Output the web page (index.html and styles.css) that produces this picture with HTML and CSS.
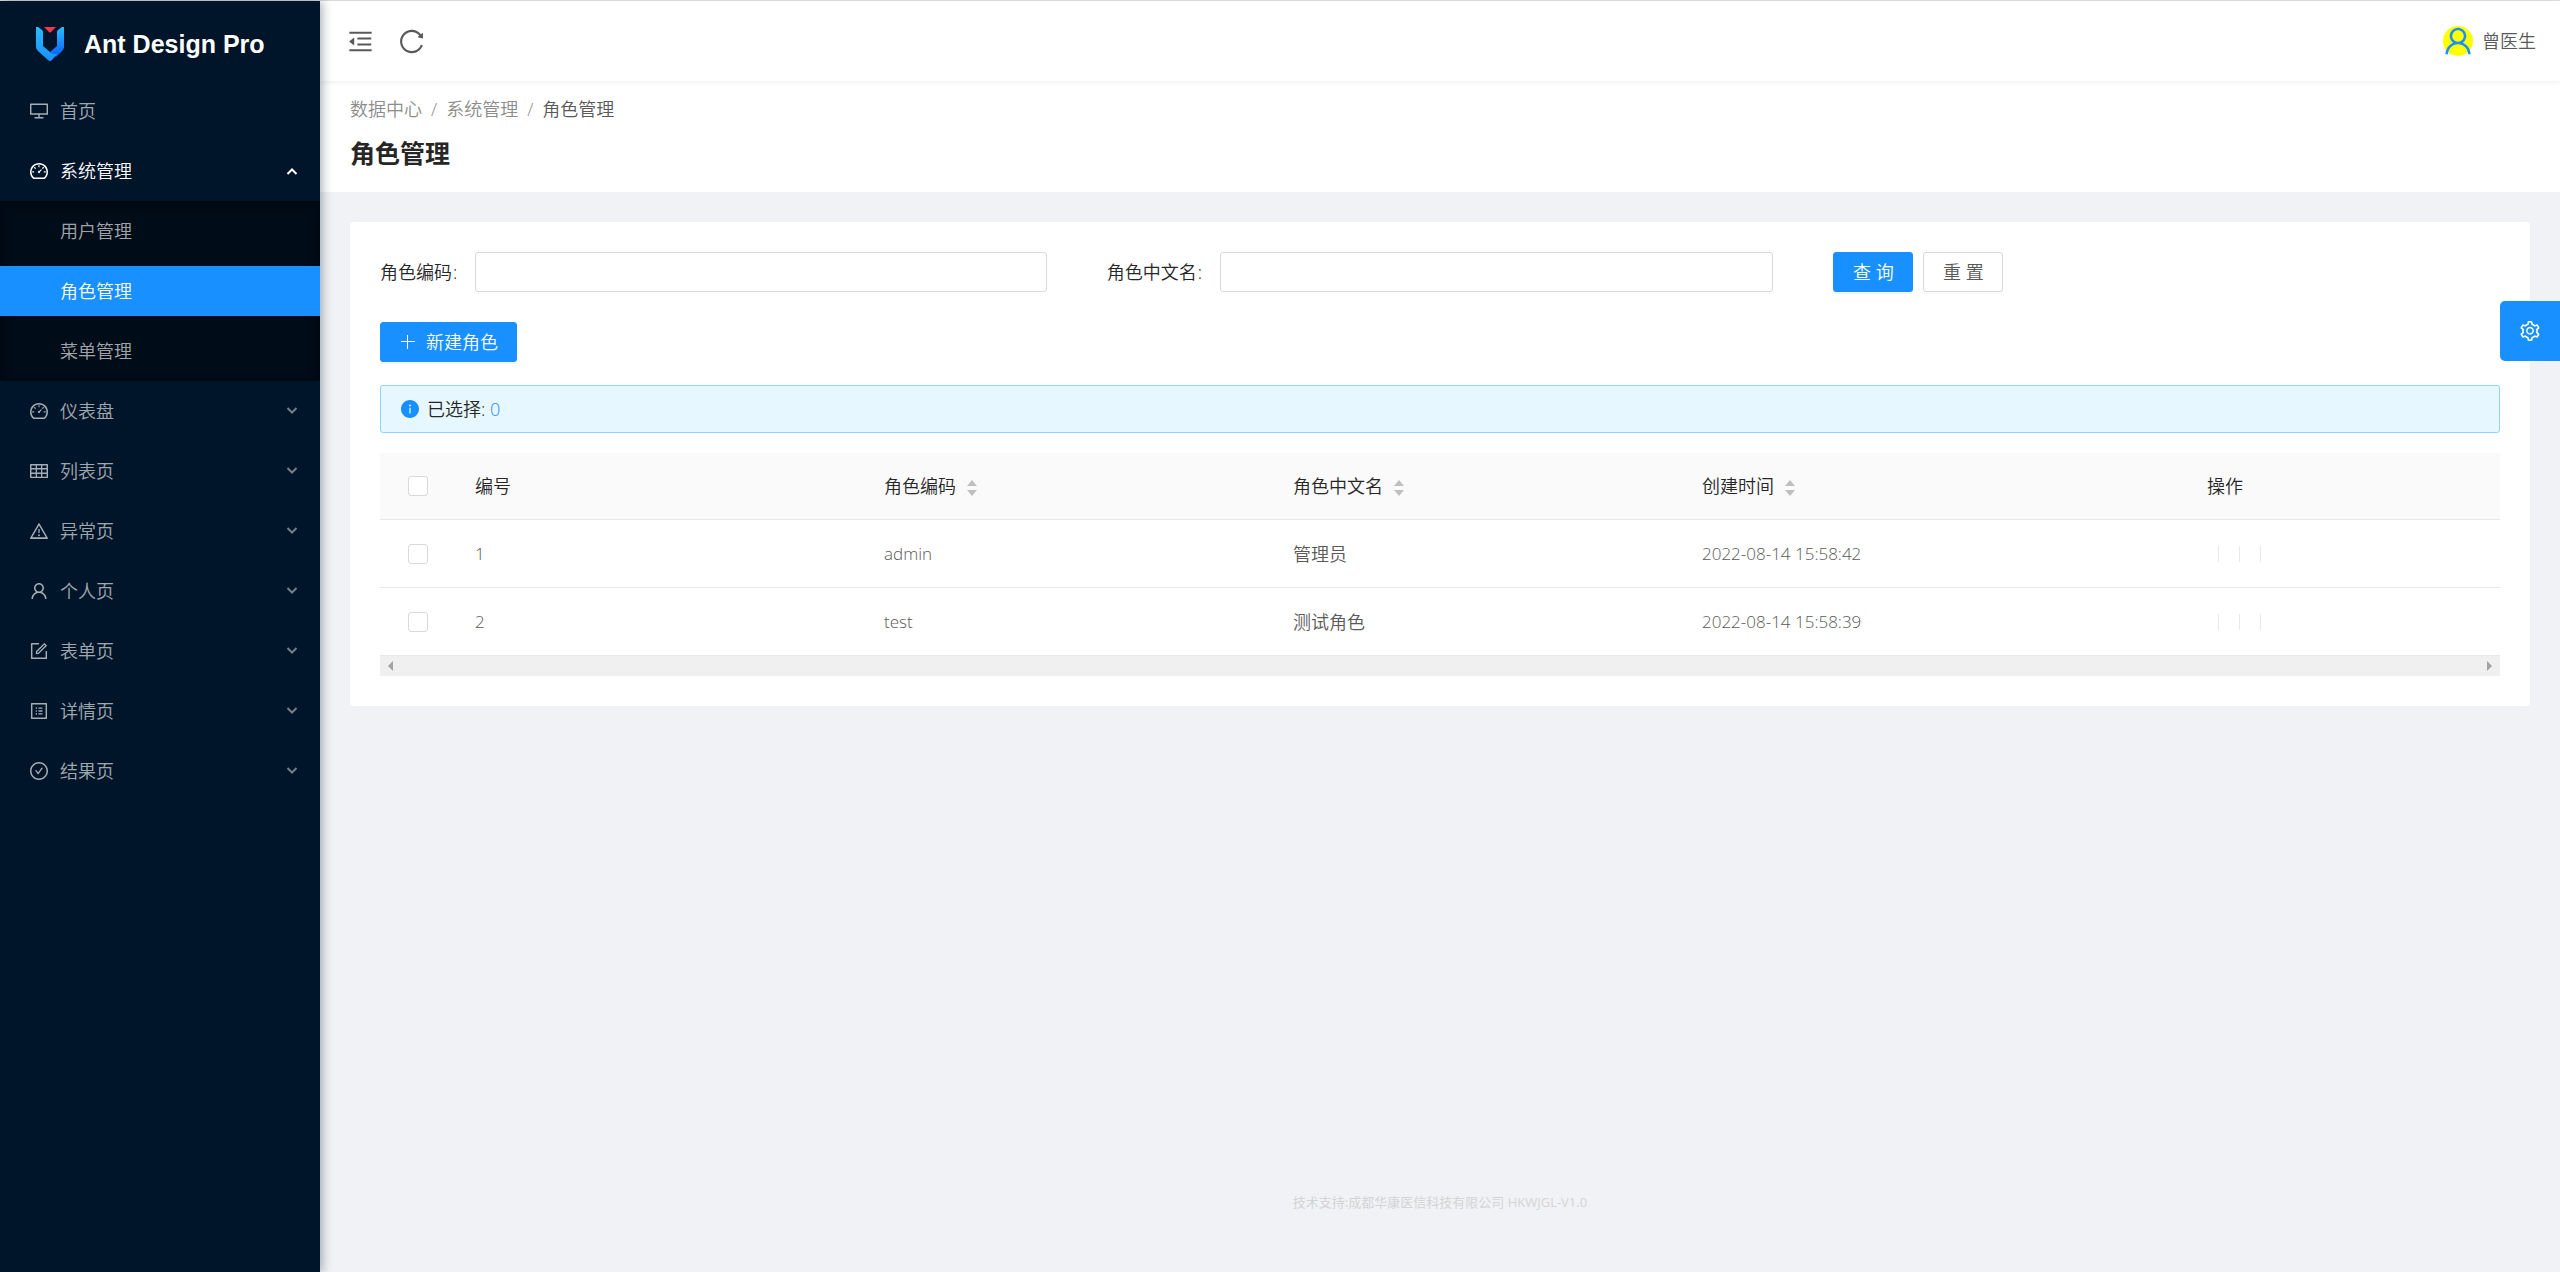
FILE: index.html
```html
<!DOCTYPE html>
<html lang="zh-CN">
<head>
<meta charset="utf-8">
<title>角色管理 - Ant Design Pro</title>
<link rel="stylesheet" href="styles.css">
</head>
<body>
<svg class="sprite" aria-hidden="true">
  <symbol id="desktop" viewBox="64 64 896 896"><path d="M928 140H96c-17.700 0-32 14.300-32 32v496c0 17.700 14.300 32 32 32h380v112H304c-8.800 0-16 7.200-16 16v48c0 4.400 3.600 8 8 8h432c4.400 0 8-3.600 8-8v-48c0-8.800-7.200-16-16-16H548V700h380c17.700 0 32-14.300 32-32V172c0-17.700-14.300-32-32-32zm-40 488H136V212h752v416z"/></symbol>
  <symbol id="dashboard" viewBox="64 64 896 896"><path d="M924.8 385.6a446.7 446.7 0 0 0-96-142.4 446.7 446.7 0 0 0-142.4-96C631.1 123.8 572.5 112 512 112s-119.1 11.8-174.4 35.2a446.7 446.7 0 0 0-142.4 96 446.7 446.7 0 0 0-96 142.4C75.8 440.9 64 499.5 64 560c0 132.7 58.3 257.7 159.9 343.1l1.7 1.4c5.8 4.8 13.1 7.5 20.6 7.5h531.7c7.5 0 14.8-2.7 20.6-7.5l1.7-1.4C901.7 817.7 960 692.7 960 560c0-60.5-11.9-119.1-35.2-174.4zM761.4 836H262.6A371.12 371.12 0 0 1 140 560c0-99.4 38.7-192.8 109-263 70.3-70.3 163.7-109 263-109 99.4 0 192.8 38.7 263 109 70.3 70.3 109 163.7 109 263 0 105.6-44.5 205.5-122.6 276zM623.5 421.5a8.03 8.03 0 0 0-11.3 0L527.7 506c-18.7-5-39.4-.2-54.1 14.5a55.95 55.95 0 0 0 0 79.2 55.95 55.95 0 0 0 79.2 0 55.87 55.87 0 0 0 14.5-54.1l84.5-84.500c3.100-3.100 3.100-8.200 0-11.300l-28.300-28.300zM490 320h44c4.400 0 8-3.600 8-8v-80c0-4.400-3.600-8-8-8h-44c-4.400 0-8 3.600-8 8v80c0 4.400 3.600 8 8 8zm260 218v44c0 4.400 3.600 8 8 8h80c4.400 0 8-3.600 8-8v-44c0-4.400-3.600-8-8-8h-80c-4.400 0-8 3.600-8 8zm12.700-197.200l-31.100-31.100a8.030 8.030 0 0 0-11.300 0l-56.600 56.600a8.030 8.030 0 0 0 0 11.300l31.100 31.100c3.100 3.100 8.200 3.100 11.300 0l56.600-56.600c3.100-3.100 3.100-8.200 0-11.300zm-458.600-31.100a8.030 8.030 0 0 0-11.300 0l-31.100 31.100a8.030 8.030 0 0 0 0 11.300l56.600 56.600c3.100 3.100 8.200 3.100 11.300 0l31.100-31.100c3.100-3.100 3.100-8.200 0-11.300l-56.600-56.600zM262 530h-80c-4.400 0-8 3.600-8 8v44c0 4.400 3.600 8 8 8h80c4.400 0 8-3.600 8-8v-44c0-4.400-3.600-8-8-8z"/></symbol>
  <symbol id="table" viewBox="64 64 896 896"><path d="M928 160H96c-17.7 0-32 14.3-32 32v640c0 17.7 14.3 32 32 32h832c17.7 0 32-14.3 32-32V192c0-17.7-14.3-32-32-32zm-40 208H676V232h212v136zm0 224H676V432h212v160zM412 432h200v160H412V432zm200-64H412V232h200v136zm-476 64h212v160H136V432zm0-200h212v136H136V232zm0 424h212v136H136V656zm276 0h200v136H412V656zm476 136H676V656h212v136z"/></symbol>
  <symbol id="warning" viewBox="64 64 896 896"><path d="M464 720a48 48 0 1 0 96 0 48 48 0 1 0-96 0zm16-304v184c0 4.4 3.6 8 8 8h48c4.4 0 8-3.6 8-8V416c0-4.4-3.6-8-8-8h-48c-4.4 0-8 3.6-8 8zm475.7 440l-416-720c-6.2-10.7-16.9-16-27.7-16s-21.6 5.3-27.7 16l-416 720C56 877.4 71.4 904 96 904h832c24.6 0 40-26.6 27.7-48zm-783.5-27.9L512 239.9l339.8 588.2H172.2z"/></symbol>
  <symbol id="user" viewBox="64 64 896 896"><path d="M858.5 763.6a374 374 0 0 0-80.6-119.5 375.63 375.63 0 0 0-119.5-80.6c-.4-.2-.8-.3-1.2-.5C719.5 518 760 444.7 760 362c0-137-111-248-248-248S264 225 264 362c0 82.7 40.5 156 102.8 201.1-.4.2-.8.3-1.2.5-44.8 18.900-85 46-119.500 80.600a375.630 375.630 0 0 0-80.600 119.500A371.700 371.700 0 0 0 136 901.800a8 8 0 0 0 8 8.200h60c4.400 0 7.900-3.500 8-7.800 2-77.200 33-149.500 87.800-204.300 56.700-56.700 132-87.900 212.200-87.900s155.500 31.200 212.200 87.900C779 752.700 810 825 812 902.200c.1 4.400 3.600 7.800 8 7.800h60a8 8 0 0 0 8-8.200c-1-47.800-10.900-94.300-29.500-138.200zM512 534c-45.900 0-89.100-17.900-121.600-50.400S340 407.900 340 362c0-45.900 17.900-89.100 50.400-121.600S466.100 190 512 190s89.100 17.900 121.600 50.400S684 316.100 684 362c0 45.900-17.900 89.100-50.400 121.600S557.900 534 512 534z"/></symbol>
  <symbol id="form" viewBox="64 64 896 896"><path d="M904 512h-56c-4.4 0-8 3.6-8 8v320H184V184h320c4.4 0 8-3.6 8-8v-56c0-4.4-3.6-8-8-8H144c-17.7 0-32 14.3-32 32v736c0 17.7 14.3 32 32 32h736c17.7 0 32-14.3 32-32V520c0-4.4-3.6-8-8-8z"/><path d="M355.9 534.9L354 653.8c-.1 8.9 7.1 16.2 16 16.2h.4l118-2.9c2-.1 4-.9 5.4-2.3l415.9-415c3.1-3.1 3.1-8.2 0-11.3L785.4 114.3c-1.600-1.600-3.600-2.300-5.700-2.300s-4.100.8-5.700 2.300l-415.800 415a8.300 8.300 0 0 0-2.300 5.600zm63.500 23.600L779.700 199l45.200 45.100-360.500 359.700-45.700 1.100.7-46.400z"/></symbol>
  <symbol id="profile" viewBox="64 64 896 896"><path d="M880 112H144c-17.7 0-32 14.3-32 32v736c0 17.7 14.3 32 32 32h736c17.7 0 32-14.3 32-32V144c0-17.7-14.3-32-32-32zm-40 728H184V184h656v656zM492 400h184c4.4 0 8-3.6 8-8v-48c0-4.4-3.6-8-8-8H492c-4.4 0-8 3.6-8 8v48c0 4.4 3.6 8 8 8zm0 144h184c4.4 0 8-3.6 8-8v-48c0-4.4-3.6-8-8-8H492c-4.4 0-8 3.6-8 8v48c0 4.4 3.6 8 8 8zm0 144h184c4.4 0 8-3.6 8-8v-48c0-4.4-3.6-8-8-8H492c-4.4 0-8 3.6-8 8v48c0 4.4 3.6 8 8 8zM340 368a40 40 0 1 0 80 0 40 40 0 1 0-80 0zm0 144a40 40 0 1 0 80 0 40 40 0 1 0-80 0zm0 144a40 40 0 1 0 80 0 40 40 0 1 0-80 0z"/></symbol>
  <symbol id="check" viewBox="64 64 896 896"><path d="M699 353h-46.9c-10.2 0-19.9 4.9-25.9 13.3L469 584.3l-71.2-98.8c-6-8.3-15.6-13.3-25.9-13.3H325c-6.5 0-10.3 7.4-6.5 12.7l124.6 172.8a31.8 31.8 0 0 0 51.7 0l210.6-292c3.9-5.3.1-12.7-6.4-12.7z"/><path d="M512 64C264.6 64 64 264.6 64 512s200.6 448 448 448 448-200.6 448-448S759.4 64 512 64zm0 820c-205.4 0-372-166.6-372-372s166.6-372 372-372 372 166.6 372 372-166.6 372-372 372z"/></symbol>
  <symbol id="fold" viewBox="64 64 896 896"><path d="M408 442h480c4.4 0 8-3.6 8-8v-56c0-4.4-3.6-8-8-8H408c-4.4 0-8 3.6-8 8v56c0 4.4 3.6 8 8 8zm-8 204c0 4.4 3.6 8 8 8h480c4.4 0 8-3.6 8-8v-56c0-4.4-3.6-8-8-8H408c-4.4 0-8 3.6-8 8v56zm504-486H120c-4.4 0-8 3.6-8 8v56c0 4.4 3.6 8 8 8h784c4.4 0 8-3.6 8-8v-56c0-4.4-3.6-8-8-8zm0 632H120c-4.4 0-8 3.6-8 8v56c0 4.4 3.6 8 8 8h784c4.4 0 8-3.6 8-8v-56c0-4.4-3.6-8-8-8zM115.4 518.9L271.7 642c5.8 4.6 14.4.5 14.4-6.9V388.9c0-7.4-8.5-11.5-14.4-6.9L115.4 505.1a8.74 8.74 0 0 0 0 13.8z"/></symbol>
  <symbol id="reload" viewBox="64 64 896 896"><path d="M909.1 209.3l-56.4 44.1C775.8 155.1 656.2 92 521.9 92 290 92 102.3 279.5 102 511.5 101.7 743.7 289.8 932 521.9 932c181.3 0 335.8-115 394.6-276.1 1.5-4.2-.7-8.9-4.9-10.3l-56.7-19.5a8 8 0 0 0-10.1 4.8c-1.8 5-3.8 10-5.9 14.9-17.3 41-42.1 77.8-73.7 109.4A344.77 344.77 0 0 1 655.9 829c-42.3 17.9-87.4 27-133.8 27-46.5 0-91.5-9.1-133.8-27A341.5 341.5 0 0 1 279 755.2a342.16 342.16 0 0 1-73.7-109.4c-17.9-42.4-27-87.4-27-133.9s9.1-91.5 27-133.9c17.3-41 42.1-77.8 73.7-109.4 31.6-31.6 68.4-56.4 109.3-73.8 42.3-17.9 87.4-27 133.8-27 46.5 0 91.5 9.1 133.8 27a341.5 341.5 0 0 1 109.3 73.8c9.900 9.900 19.200 20.400 27.800 31.400l-60.200 47a8 8 0 0 0 3 14.100l175.600 43c5 1.200 9.900-2.600 9.900-7.700l.8-180.900c-.1-6.600-7.800-10.300-13-6.200z"/></symbol>
  <symbol id="setting" viewBox="64 64 896 896"><path d="M924.8 625.7l-65.5-56c3.1-19 4.7-38.4 4.7-57.8s-1.6-38.8-4.7-57.8l65.5-56a32.03 32.03 0 0 0 9.3-35.2l-.9-2.6a443.74 443.74 0 0 0-79.7-137.9l-1.8-2.1a32.12 32.12 0 0 0-35.1-9.5l-81.3 28.9c-30-24.6-63.5-44-99.7-57.6l-15.7-85a32.05 32.05 0 0 0-25.8-25.7l-2.7-.5c-52.1-9.4-106.9-9.4-159 0l-2.7.5a32.05 32.05 0 0 0-25.8 25.7l-15.8 85.4a351.86 351.86 0 0 0-99 57.4l-81.9-29.1a32 32 0 0 0-35.1 9.5l-1.8 2.1a446.02 446.02 0 0 0-79.7 137.9l-.9 2.6c-4.5 12.5-.8 26.5 9.3 35.2l66.3 56.6c-3.1 18.8-4.6 38-4.6 57.1 0 19.2 1.5 38.4 4.6 57.1L99 625.5a32.03 32.03 0 0 0-9.3 35.2l.9 2.6c18.1 50.4 44.9 96.9 79.7 137.9l1.8 2.1a32.12 32.12 0 0 0 35.1 9.5l81.9-29.1c29.8 24.5 63.1 43.9 99 57.4l15.8 85.4a32.05 32.05 0 0 0 25.8 25.7l2.7.5a449.4 449.4 0 0 0 159 0l2.7-.5a32.05 32.05 0 0 0 25.8-25.7l15.7-85a350 350 0 0 0 99.7-57.6l81.3 28.9a32 32 0 0 0 35.1-9.5l1.8-2.1c34.8-41.1 61.6-87.5 79.7-137.9l.9-2.6c4.5-12.3.8-26.3-9.3-35zM788.3 465.9c2.5 15.1 3.8 30.6 3.8 46.1s-1.3 31-3.8 46.1l-6.6 40.1 74.7 63.9a370.03 370.03 0 0 1-42.6 73.6L721 702.8l-31.4 25.8c-23.9 19.6-50.5 35-79.3 45.8l-38.1 14.3-17.9 97a377.5 377.5 0 0 1-85 0l-17.9-97.2-37.8-14.5c-28.5-10.8-55-26.2-78.7-45.7l-31.4-25.9-93.4 33.2c-17-22.9-31.2-47.6-42.6-73.6l75.5-64.5-6.5-40c-2.4-14.900-3.700-30.300-3.700-45.500 0-15.300 1.200-30.600 3.700-45.500l6.500-40-75.500-64.500c11.300-26.100 25.600-50.700 42.600-73.600l93.400 33.200 31.400-25.900c23.700-19.500 50.200-34.900 78.700-45.700l37.900-14.300 17.900-97.200c28.100-3.200 56.800-3.200 85 0l17.900 97 38.100 14.300c28.700 10.800 55.400 26.200 79.300 45.800l31.400 25.800 92.800-32.900c17 22.900 31.200 47.600 42.600 73.600L781.800 426l6.500 39.900zM512 326c-97.200 0-176 78.800-176 176s78.800 176 176 176 176-78.800 176-176-78.800-176-176-176zm79.200 255.200A111.600 111.600 0 0 1 512 614c-29.900 0-58-11.700-79.200-32.800A111.600 111.600 0 0 1 400 502c0-29.900 11.700-58 32.800-79.200C454 401.600 482.100 390 512 390c29.900 0 58 11.600 79.200 32.800A111.600 111.600 0 0 1 624 502c0 29.900-11.700 58-32.800 79.200z"/></symbol>
  <symbol id="info" viewBox="64 64 896 896"><path d="M512 64C264.6 64 64 264.6 64 512s200.6 448 448 448 448-200.6 448-448S759.4 64 512 64zm32 664c0 4.4-3.6 8-8 8h-48c-4.4 0-8-3.6-8-8V456c0-4.4 3.6-8 8-8h48c4.4 0 8 3.6 8 8v272zm-32-344a48.01 48.01 0 0 1 0-96 48.01 48.01 0 0 1 0 96z"/></symbol>
  <symbol id="plus" viewBox="0 0 18 18"><path d="M8 2h1v6h7v1H9v7H8V9H2V8h6z"/></symbol>
  <symbol id="chevron" viewBox="0 0 12 12"><path d="M1.500 3L6 7.500l4.500-4.500" fill="none" stroke="currentColor" stroke-width="2"/></symbol>
  <symbol id="sort" viewBox="0 0 10 16"><path d="M5 0l5 6H0zM5 16l5-6H0z"/></symbol>
</svg>

<div class="layout">
  <aside class="sider">
    <a class="brand" href="#">
      <svg class="brand-mark" viewBox="0 0 28 35" aria-hidden="true">
        <defs>
          <linearGradient id="blue" x1="0" y1="0" x2="0" y2="1"><stop offset="0" stop-color="#29bdff"/><stop offset="1" stop-color="#1890ff"/></linearGradient>
          <linearGradient id="deep" x1="0" y1="0" x2="0" y2="1"><stop offset="0" stop-color="#29bdff"/><stop offset="1" stop-color="#0a60ff"/></linearGradient>
        </defs>
        <path fill="url(#deep)" d="M28 0v20q0 2-2 4l-6 6-6-5 7-6V5q0-1 1-2l4-3z"/>
        <path fill="url(#blue)" d="M0 0h2l4 3q1 1 1 2v14l7 6 3 2h4l-5 6q-2 2-4 0L2 24q-2-2-2-4z"/>
        <path fill="#f5394c" d="M8 0h12l-5 5q-1 1-2 0z"/>
      </svg>
      <span>Ant Design Pro</span>
    </a>
    <nav>
      <ul class="menu">
        <li><a href="#"><svg class="icon"><use href="#desktop"/></svg>首页</a></li>
        <li class="open"><a href="#"><svg class="icon"><use href="#dashboard"/></svg>系统管理<svg class="arrow"><use href="#chevron"/></svg></a>
          <ul class="submenu">
            <li><a href="#">用户管理</a></li>
            <li><a class="active" href="#" aria-current="page">角色管理</a></li>
            <li><a href="#">菜单管理</a></li>
          </ul>
        </li>
        <li><a href="#"><svg class="icon"><use href="#dashboard"/></svg>仪表盘<svg class="arrow"><use href="#chevron"/></svg></a></li>
        <li><a href="#"><svg class="icon"><use href="#table"/></svg>列表页<svg class="arrow"><use href="#chevron"/></svg></a></li>
        <li><a href="#"><svg class="icon"><use href="#warning"/></svg>异常页<svg class="arrow"><use href="#chevron"/></svg></a></li>
        <li><a href="#"><svg class="icon"><use href="#user"/></svg>个人页<svg class="arrow"><use href="#chevron"/></svg></a></li>
        <li><a href="#"><svg class="icon"><use href="#form"/></svg>表单页<svg class="arrow"><use href="#chevron"/></svg></a></li>
        <li><a href="#"><svg class="icon"><use href="#profile"/></svg>详情页<svg class="arrow"><use href="#chevron"/></svg></a></li>
        <li><a href="#"><svg class="icon"><use href="#check"/></svg>结果页<svg class="arrow"><use href="#chevron"/></svg></a></li>
      </ul>
    </nav>
  </aside>

  <div class="main">
    <header class="topbar">
      <button class="tool" type="button" aria-label="收起菜单"><svg><use href="#fold"/></svg></button>
      <button class="tool" type="button" aria-label="刷新"><svg><use href="#reload"/></svg></button>
      <a class="account" href="#"><span class="avatar"><svg><use href="#user"/></svg></span>曾医生</a>
    </header>

    <div class="page-head">
      <nav class="crumbs"><a href="#">数据中心</a><i>/</i><a href="#">系统管理</a><i>/</i><span>角色管理</span></nav>
      <h1>角色管理</h1>
    </div>

    <main class="card">
      <form class="search">
        <div class="field"><label for="code">角色编码<span class="colon">:</span></label><input id="code" type="text"></div>
        <div class="field"><label for="name">角色中文名<span class="colon">:</span></label><input id="name" type="text"></div>
        <div class="field actions"><button class="btn primary" type="button">查 询</button><button class="btn" type="button">重 置</button></div>
      </form>
      <button class="btn primary create" type="button"><svg class="icon"><use href="#plus"/></svg>新建角色</button>
      <div class="alert"><svg class="icon"><use href="#info"/></svg><span>已选择: <a href="#">0</a></span></div>
      <div class="table-wrap">
        <table>
          <colgroup><col class="c-check"><col class="c-data"><col class="c-data"><col class="c-data"><col><col class="c-action"></colgroup>
          <thead>
            <tr><th><input type="checkbox" aria-label="全选"></th><th>编号</th><th>角色编码<svg class="sort"><use href="#sort"/></svg></th><th>角色中文名<svg class="sort"><use href="#sort"/></svg></th><th>创建时间<svg class="sort"><use href="#sort"/></svg></th><th>操作</th></tr>
          </thead>
          <tbody>
            <tr><td><input type="checkbox" aria-label="选择 1"></td><td class="latin">1</td><td class="latin">admin</td><td>管理员</td><td class="latin">2022-08-14 15:58:42</td><td><div class="ops"><hr><hr><hr></div></td></tr>
            <tr><td><input type="checkbox" aria-label="选择 2"></td><td class="latin">2</td><td class="latin">test</td><td>测试角色</td><td class="latin">2022-08-14 15:58:39</td><td><div class="ops"><hr><hr><hr></div></td></tr>
          </tbody>
        </table>
        <div class="scrollbar" aria-hidden="true"><i class="left"></i><i class="right"></i></div>
      </div>
    </main>

    <footer>技术支持:成都华康医信科技有限公司 HKWJGL-V1.0</footer>
  </div>
</div>
<button class="settings" type="button" aria-label="设置"><svg><use href="#setting"/></svg></button>
</body>
</html>
```
FILE: styles.css
```css
* { box-sizing: border-box; }
body {
  margin: 0;
  font: 350 18px/28px "Open Sans", "Noto Sans CJK SC", sans-serif;
  color: #595959;
  background: #f0f2f5;
}
a { color: inherit; text-decoration: none; }
ul { list-style: none; margin: 0; padding: 0; }
svg { display: block; fill: currentColor; flex: none; }
button, input { font: inherit; color: inherit; }
button { cursor: pointer; }
.sprite { display: none; }
.icon { width: 18px; height: 18px; }

.layout { display: flex; min-height: 100vh; border-top: 1px solid #dedede; }

/* Side menu */
.sider {
  flex: 0 0 320px;
  position: relative;
  z-index: 2;
  background: #001529;
  color: rgba(255, 255, 255, .65);
  box-shadow: 2px 0 10px rgba(0, 21, 41, .35);
}
.brand {
  display: flex;
  align-items: center;
  gap: 20px;
  height: 80px;
  padding: 6px 36px 0;
  color: #fff;
  font: bold 25px/40px "Liberation Sans", sans-serif;
}
.brand-mark { width: 28px; height: 35px; }
.menu a {
  display: flex;
  align-items: center;
  gap: 12px;
  height: 50px;
  padding: 0 22px 0 30px;
}
.menu li { padding: 5px 0; }
.menu .open { padding-bottom: 0; color: #fff; }
.arrow { width: 12px; height: 12px; margin-left: auto; opacity: .7; }
.open .arrow { transform: rotate(180deg); opacity: 1; }
.submenu {
  margin-top: 5px;
  background: #000c17;
  color: rgba(255, 255, 255, .65);
  box-shadow: inset 0 3px 10px rgba(0, 0, 0, .45);
}
.submenu a { padding-left: 60px; }
.submenu .active { background: #1890ff; color: #fff; }

/* Header */
.main { flex: 1; min-width: 0; display: flex; flex-direction: column; }
.topbar {
  display: flex;
  align-items: center;
  gap: 26px;
  height: 80px;
  padding: 0 24px 0 28px;
  background: #fff;
  box-shadow: 0 1px 5px rgba(0, 21, 41, .08);
  position: relative;
  z-index: 1;
}
.tool { border: 0; padding: 0; background: none; }
.tool svg { width: 25px; height: 25px; }
.account { display: flex; align-items: center; gap: 9px; margin-left: auto; }
.avatar { display: grid; place-items: center; width: 30px; height: 30px; border-radius: 50%; background: #ff0; color: #1890ff; }
.avatar svg { width: 30px; height: 30px; }

.page-head { padding: 14px 30px 20px; background: #fff; }
.crumbs { display: flex; gap: 9px; color: #8c8c8c; }
.crumbs i { font-style: normal; }
.crumbs span { color: #595959; }
h1 { margin: 11px 0 0; font-size: 25px; line-height: 38px; font-weight: 700; color: #262626; }

/* Content card */
.card { margin: 30px; padding: 30px; background: #fff; border-radius: 3px; }
.search { display: grid; grid-template-columns: repeat(3, 1fr); gap: 60px; }
.field { display: flex; align-items: center; color: #262626; }
.colon { margin: 0 18px 0 1px; }
.field input { flex: 1; min-width: 0; height: 40px; padding: 0 14px; border: 1px solid #d9d9d9; border-radius: 3px; background: #fff; }
.actions { gap: 10px; }
.btn {
  min-width: 80px;
  height: 40px;
  padding: 0 18px;
  border: 1px solid #d9d9d9;
  border-radius: 3px;
  background: #fff;
  color: #595959;
  box-shadow: 0 2px 0 rgba(0, 0, 0, .02);
}
.primary { background: #1890ff; border-color: #1890ff; color: #fff; box-shadow: 0 2px 0 rgba(0, 0, 0, .05); }
.create { display: flex; align-items: center; gap: 9px; margin-top: 30px; }
.alert {
  display: flex;
  align-items: center;
  gap: 8px;
  height: 48px;
  margin: 23px 0 20px;
  padding: 0 20px;
  border: 1px solid #91d5ff;
  border-radius: 3px;
  background: #e6f7ff;
  color: #262626;
}
.alert .icon, .alert a { color: #1890ff; }

table { width: 100%; table-layout: fixed; border-collapse: separate; border-spacing: 0; }
.c-check { width: 75px; }
.c-data { width: 409px; }
.c-action { width: 313px; }
th, td { height: 68px; padding: 0 20px; text-align: left; font-weight: inherit; border-bottom: 1px solid #e8e8e8; }
th { height: 67px; background: #fafafa; color: #262626; }
th:first-child, td:first-child { padding: 0 28px; }
.latin { font-size: 17px; }
input[type="checkbox"] { display: block; appearance: none; width: 20px; height: 20px; margin: 0; border: 1px solid #d9d9d9; border-radius: 3px; background: #fff; }
.sort { display: inline-block; width: 10px; height: 16px; margin-left: 11px; vertical-align: -3px; color: #bfbfbf; }
.ops { display: flex; gap: 20px; padding-left: 11px; }
.ops hr { width: 1px; height: 16px; margin: 0; border: 0; background: #e8e8e8; }
.scrollbar { display: flex; justify-content: space-between; align-items: center; height: 20px; padding: 0 8px; background: #f0f0f0; }
.scrollbar i { border: 5px solid transparent; border-width: 5px 0; }
.scrollbar .left { border-right: 5px solid #a3a3a3; }
.scrollbar .right { border-left: 5px solid #a3a3a3; }

footer { margin-top: auto; padding-bottom: 60px; text-align: center; font-size: 13px; font-weight: 400; line-height: 20px; color: #d4d4d4; }

.settings {
  position: fixed;
  top: 301px;
  right: 0;
  z-index: 3;
  display: grid;
  place-items: center;
  width: 60px;
  height: 60px;
  padding: 0;
  border: 0;
  border-radius: 5px 0 0 5px;
  background: #1890ff;
  color: #fff;
}
.settings svg { width: 20px; height: 20px; }
```
